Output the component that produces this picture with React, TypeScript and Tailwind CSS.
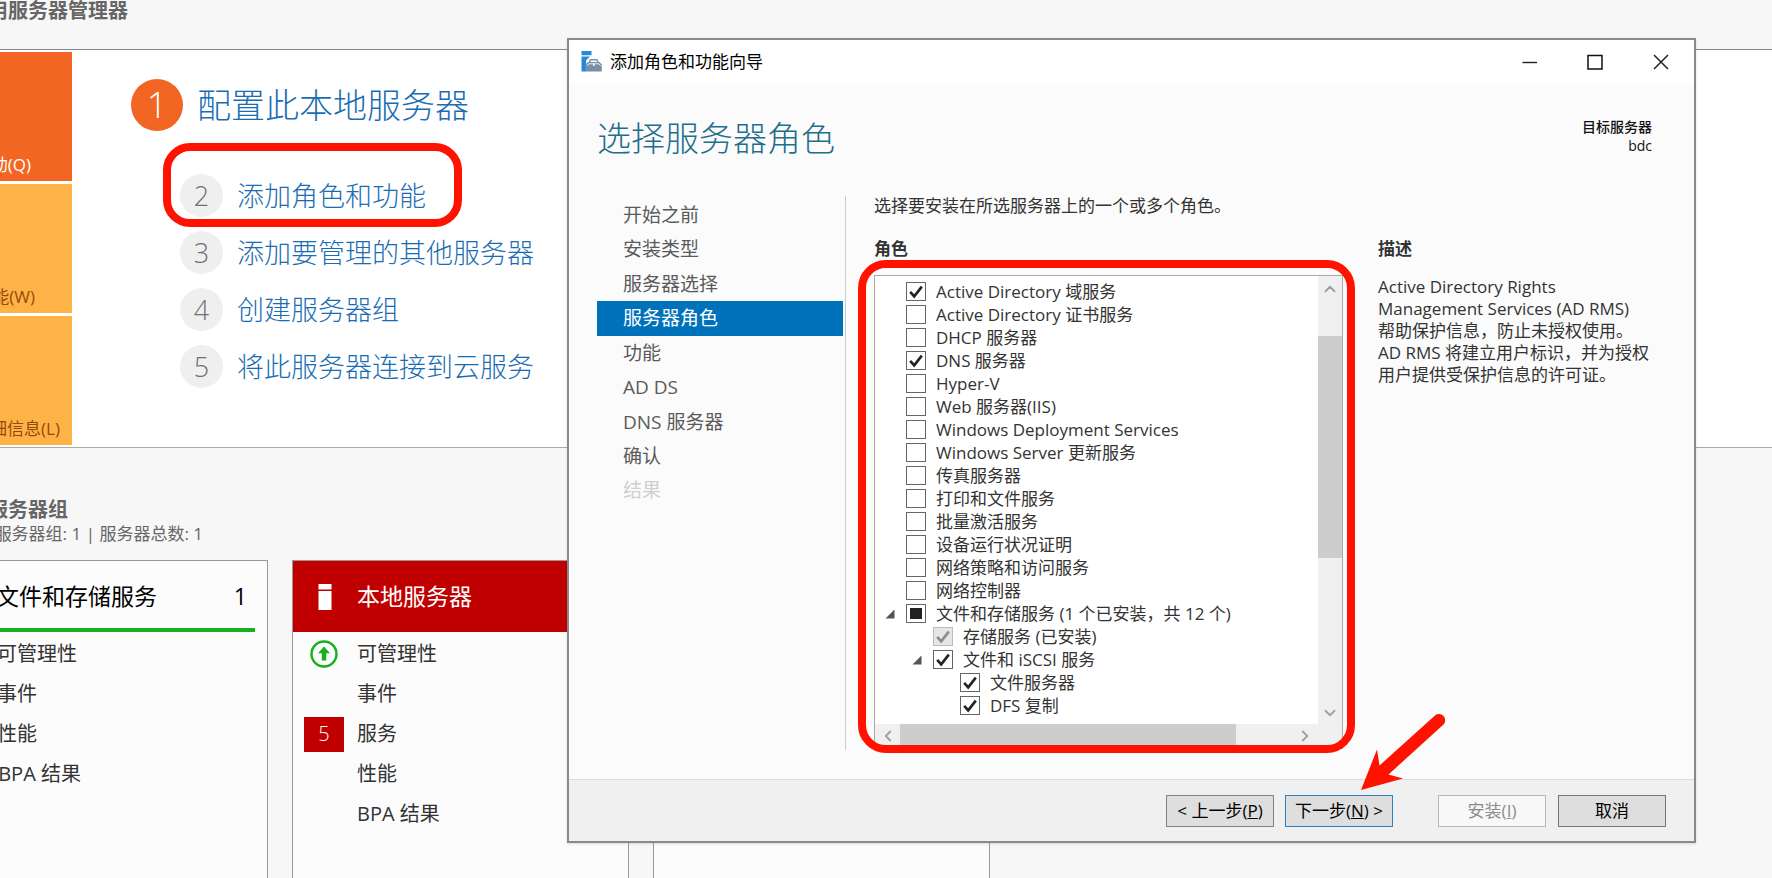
import { useId } from "react";
import type { ReactNode } from "react";
import { ChevronDown, ChevronLeft, ChevronRight, ChevronUp } from "lucide-react";

const quickTiles = [
  { label: "动(Q)", tile: "bg-[#f26522] text-white pr-[41px]" },
  { label: "能(W)", tile: "bg-[#ffb347] text-[#94490a] pr-[37px]" },
  { label: "细信息(L)", tile: "bg-[#ffb347] text-[#94490a] pr-3" },
];

const steps = [
  { n: 2, label: "添加角色和功能", marked: true },
  { n: 3, label: "添加要管理的其他服务器", marked: false },
  { n: 4, label: "创建服务器组", marked: false },
  { n: 5, label: "将此服务器连接到云服务", marked: false },
];

const navItems = [
  "开始之前",
  "安装类型",
  "服务器选择",
  "服务器角色",
  "功能",
  "AD DS",
  "DNS 服务器",
  "确认",
  "结果",
];

type Role = {
  label: string;
  state?: "on" | "mixed" | "locked";
  level?: 1 | 2;
  open?: boolean;
};

const roles: Role[] = [
  { label: "Active Directory 域服务", state: "on" },
  { label: "Active Directory 证书服务" },
  { label: "DHCP 服务器" },
  { label: "DNS 服务器", state: "on" },
  { label: "Hyper-V" },
  { label: "Web 服务器(IIS)" },
  { label: "Windows Deployment Services" },
  { label: "Windows Server 更新服务" },
  { label: "传真服务器" },
  { label: "打印和文件服务" },
  { label: "批量激活服务" },
  { label: "设备运行状况证明" },
  { label: "网络策略和访问服务" },
  { label: "网络控制器" },
  { label: "文件和存储服务 (1 个已安装，共 12 个)", state: "mixed", open: true },
  { label: "存储服务 (已安装)", state: "locked", level: 1 },
  { label: "文件和 iSCSI 服务", state: "on", level: 1, open: true },
  { label: "文件服务器", state: "on", level: 2 },
  { label: "DFS 复制", state: "on", level: 2 },
];

const indents = ["pl-[10px]", "pl-[37px]", "pl-[64px]"];

function RoleRow({ role }: { role: Role }) {
  const id = useId();
  return (
    <li className={`flex h-[23px] items-center ${indents[role.level ?? 0]}`}>
      <span className="flex w-[21px] items-center">
        {role.open && (
          <svg width="10" height="10" viewBox="0 0 10 10" aria-hidden="true">
            <path d="M9.5 0.5V9.5H0.5Z" fill="#555" />
          </svg>
        )}
      </span>
      <span className="grid place-items-center">
        <input
          id={id}
          type="checkbox"
          defaultChecked={role.state === "on" || role.state === "locked"}
          disabled={role.state === "locked"}
          className="peer col-start-1 row-start-1 h-[19px] w-5 appearance-none border border-[#666] bg-white disabled:border-[#bcbcbc] disabled:bg-[#e6e6e6]"
        />
        <svg
          width="14"
          height="14"
          viewBox="0 0 14 14"
          aria-hidden="true"
          className="pointer-events-none col-start-1 row-start-1 text-[#222] opacity-0 peer-checked:opacity-100 peer-disabled:text-[#8c8c8c]"
        >
          <path d="M1.2 6.8L5.2 11.4L12.8 1.6" fill="none" stroke="currentColor" strokeWidth="2.6" />
        </svg>
        {role.state === "mixed" && (
          <span className="pointer-events-none col-start-1 row-start-1 h-[11px] w-3 bg-[#222]" />
        )}
      </span>
      <label htmlFor={id} className="pl-[10px] whitespace-nowrap">
        {role.label}
      </label>
    </li>
  );
}

function WizardButton({ look, disabled, children }: { look: string; disabled?: boolean; children: ReactNode }) {
  return (
    <button
      type="button"
      disabled={disabled}
      className={`h-8 w-[108px] border text-[17px] leading-5 whitespace-nowrap ${look}`}
    >
      {children}
    </button>
  );
}

function AppIcon() {
  return (
    <svg width="21" height="21" viewBox="0 0 21 21" aria-hidden="true">
      <path d="M0.5 0H10.5V4.2H0.5ZM0.5 5.4H9L5 9.5V20.5H0.5Z" fill="#2688d8" />
      <path d="M4.600 20.500V13.200L7 11H18.200L20.800 13.200V20.500Z" fill="#7690a8" />
      <path d="M8.800 12V10.200Q8.800 8.800 10.200 8.800H15.200Q16.600 8.800 16.600 10.200V12" fill="none" stroke="#7690a8" strokeWidth="1.5" />
      <path d="M5.800 14.800L8 12.800H17.600L19.800 14.800" fill="none" stroke="#fff" strokeWidth="0.9" />
      <path d="M12 12.800H13.500V15H12Z" fill="#fff" />
    </svg>
  );
}

export default function App() {
  return (
    <div className="relative flex h-screen flex-col overflow-hidden bg-[#f7f7f7] font-['Open_Sans','Noto_Sans_CJK_SC',sans-serif] text-[17px] text-[#333]">
      <header className="flex h-[49px] w-32 shrink-0 justify-end">
        <h1 className="text-[20px] leading-[22px] font-bold whitespace-nowrap text-[#666]">用服务器管理器</h1>
      </header>

      <section className="flex h-[399px] shrink-0 border-y border-t-[#888] border-b-[#aaa] bg-white pt-0.5 pb-px">
        <div className="flex w-[72px] shrink-0 flex-col gap-[3px] pb-px">
          {quickTiles.map((t) => (
            <button
              key={t.label}
              type="button"
              className={`flex flex-1 items-end justify-end pb-1 leading-6 whitespace-nowrap ${t.tile}`}
            >
              {t.label}
            </button>
          ))}
        </div>
        <div className="pt-[27px] pl-[59px]">
          <a href="#local" className="flex items-center gap-[14px] text-[34px] leading-[52px] font-light whitespace-nowrap text-[#1a6db3]">
            <span className="flex size-[52px] items-center justify-center rounded-full bg-[#f26522] text-[36px] text-white">
              1
            </span>
            配置此本地服务器
          </a>
          <ol className="flex flex-col gap-[14px] pt-[43px] pl-[49px]">
            {steps.map((s) => (
              <li key={s.n} className="relative">
                <a href={`#step-${s.n}`} className="flex items-center gap-[14px] text-[27px] leading-[43px] font-light whitespace-nowrap text-[#1a6db3]">
                  <span className="flex size-[43px] items-center justify-center rounded-full bg-[#efefef] text-[#707070]">
                    {s.n}
                  </span>
                  {s.label}
                </a>
                {s.marked && (
                  <span className="pointer-events-none absolute -top-[31px] -left-[17px] h-[84px] w-[299px] rounded-[27px] border-8 border-[#ff1200]" />
                )}
              </li>
            ))}
          </ol>
        </div>
      </section>

      <section className="flex min-h-0 flex-1 flex-col pt-[50px]">
        <h2 className="flex w-[68px] justify-end text-[20px] leading-6 font-bold whitespace-nowrap text-[#666]">
          服务器组
        </h2>
        <p className="flex w-[203px] justify-end leading-6 whitespace-nowrap text-[#666]">服务器组: 1 | 服务器总数: 1</p>
        <div className="mt-[14px] flex flex-1 text-[20px] whitespace-nowrap">
          <article className="w-[268px] shrink-0 border-t border-r border-[#999] bg-[#fcfcfc] pr-3">
            <div className="flex h-[71px] items-center justify-between border-b-4 border-[#16b01c] pr-2 pt-[3px] text-[23px] text-black">
              <h3 className="flex w-[157px] justify-end">文件和存储服务</h3>
              <span>1</span>
            </div>
            <ul className="w-20 pt-0.5 leading-10">
              <li className="flex w-[77px] justify-end">可管理性</li>
              <li className="flex w-[37px] justify-end">事件</li>
              <li className="flex w-[37px] justify-end">性能</li>
              <li className="flex w-[81px] justify-end">BPA 结果</li>
            </ul>
          </article>
          <article className="ml-6 w-[337px] shrink-0 border-x border-t border-[#999] bg-[#fcfcfc]">
            <div className="flex h-[71px] items-center bg-[#c00000] text-[23px] text-white">
              <span className="flex w-16 justify-center">
                <svg width="14" height="26" viewBox="0 0 14 26" aria-hidden="true">
                  <path d="M0.500 0H13.500V5.600H0.500ZM0.500 7H13.500V26H0.500Z" fill="#fff" />
                </svg>
              </span>
              <h3>本地服务器</h3>
            </div>
            <ul className="pt-0.5 leading-10">
              {["可管理性", "事件", "服务", "性能", "BPA 结果"].map((label, i) => (
                <li key={label} className="flex items-center">
                  <span className="flex w-16 items-center pl-[11px]">
                    {i === 0 && (
                      <svg width="40" height="28" viewBox="0 0 40 28" aria-hidden="true">
                        <circle cx="20" cy="14" r="12.5" fill="none" stroke="#16b01c" strokeWidth="2.4" />
                        <path d="M20 6.5L26 13.200H22.200V20.5H17.800V13.200H14Z" fill="#16b01c" />
                      </svg>
                    )}
                    {i === 2 && (
                      <span className="flex h-[35px] w-10 items-center justify-center bg-[#c00000] font-light text-white">
                        5
                      </span>
                    )}
                  </span>
                  {label}
                </li>
              ))}
            </ul>
          </article>
          <article className="ml-6 w-[337px] shrink-0 border-x border-t border-[#999] bg-[#fcfcfc]" />
        </div>
      </section>

      <div
        role="dialog"
        aria-labelledby="wizard-title"
        className="absolute top-[38px] right-[76px] left-[567px] flex flex-col border-2 border-[#8a8a8a] bg-[#fbfbfb] shadow-sm"
      >
        <div className="flex h-11 items-center bg-white pr-[25px] pb-px pl-3 text-black">
          <AppIcon />
          <h2 id="wizard-title" className="flex-1 pl-2">
            添加角色和功能向导
          </h2>
          <div className="flex gap-[50px]">
            <button type="button" aria-label="最小化">
              <svg width="16" height="16" viewBox="0 0 16 16">
                <path d="M1.500 8.5H16" stroke="#222" strokeWidth="1.4" />
              </svg>
            </button>
            <button type="button" aria-label="最大化">
              <svg width="16" height="16" viewBox="0 0 16 16">
                <path d="M1 1.5H15V15H1Z" fill="none" stroke="#111" strokeWidth="1.5" />
              </svg>
            </button>
            <button type="button" aria-label="关闭">
              <svg width="16" height="16" viewBox="0 0 16 16">
                <path d="M1 1L15 15M15 1L1 15" stroke="#222" strokeWidth="1.5" />
              </svg>
            </button>
          </div>
        </div>

        <div className="flex h-28 justify-between pr-[42px] pl-7">
          <h3 className="pt-7 text-[34px] leading-[52px] font-light text-[#1d6f8c]">选择服务器角色</h3>
          <div className="pt-[33px] text-right text-[14px] leading-[19px] text-[#111]">
            <div className="font-medium">目标服务器</div>
            <div>bdc</div>
          </div>
        </div>

        <div className="flex h-[583px]">
          <nav className="ml-7 h-[554px] w-[249px] shrink-0 border-r border-[#ccc] pt-0.5 pr-0.5">
            <ul className="flex h-[310px] flex-col text-[19px] text-[#5a5a5a]">
              {navItems.map((item) => (
                <li key={item} className="flex flex-1">
                  <a
                    href="#wizard"
                    className={
                      item === "服务器角色"
                        ? "flex flex-1 items-center bg-[#0072bc] pl-[26px] text-white"
                        : item === "结果"
                          ? "flex flex-1 items-center pl-[26px] text-[#cfcfcf]"
                          : "flex flex-1 items-center pl-[26px]"
                    }
                  >
                    {item}
                  </a>
                </li>
              ))}
            </ul>
          </nav>

          <div className="flex-1 pl-7">
            <p className="leading-5">选择要安装在所选服务器上的一个或多个角色。</p>
            <div className="flex pt-[23px]">
              <div>
                <h4 className="leading-5 font-bold">角色</h4>
                <div className="relative mt-4 grid h-[474px] w-[469px] grid-cols-[1fr_24px] grid-rows-[1fr_24px] border border-[#aaa] bg-white">
                  <ul className="pt-1">
                    {roles.map((r) => (
                      <RoleRow key={r.label} role={r} />
                    ))}
                  </ul>
                  <div className="flex flex-col items-center bg-[#f0f0f0] text-[#a0a0a0]">
                    <ChevronUp size={18} strokeWidth={2.5} className="mt-1" />
                    <div className="mt-[38px] h-[222px] w-full bg-[#cdcdcd]" />
                    <ChevronDown size={18} strokeWidth={2.5} className="mt-auto mb-0.5" />
                  </div>
                  <div className="flex items-center bg-[#f0f0f0] text-[#a0a0a0]">
                    <ChevronLeft size={18} strokeWidth={2.5} className="ml-1" />
                    <div className="ml-[3px] h-full w-[336px] bg-[#cdcdcd]" />
                    <ChevronRight size={18} strokeWidth={2.5} className="mr-1 ml-auto" />
                  </div>
                  <div className="bg-[#f0f0f0]" />
                  <span className="pointer-events-none absolute -top-4 -right-[13px] -bottom-[5px] -left-[17px] rounded-[28px] border-8 border-[#ff1200]" />
                </div>
              </div>
              <div className="pl-[35px]">
                <h4 className="leading-5 font-bold">描述</h4>
                <p className="pt-[17px] leading-[22px] whitespace-nowrap">
                  Active Directory Rights
                  <br />
                  Management Services (AD RMS)
                  <br />
                  帮助保护信息，防止未授权使用。
                  <br />
                  AD RMS 将建立用户标识，并为授权
                  <br />
                  用户提供受保护信息的许可证。
                </p>
              </div>
            </div>
          </div>
        </div>

        <footer className="flex h-[62px] items-center justify-end border-t border-[#dcdcdc] bg-[#f0f0f0] pr-7 text-black">
          <WizardButton look="border-[#808080] bg-[#dedede]">
            &lt; 上一步(<u>P</u>)
          </WizardButton>
          <span className="relative ml-[11px]">
            <WizardButton look="border-[#2f80bf] bg-[#dedede]">
              下一步(<u>N</u>) &gt;
            </WizardButton>
            <svg
              width="86"
              height="80"
              viewBox="0 0 86 80"
              aria-hidden="true"
              className="pointer-events-none absolute -top-[84px] left-[75px]"
            >
              <path
                d="M1 79L17 38.500L19.500 54.500L75 4.500A6.200 6.200 0 0 1 83.500 13.500L28.500 63.500L43 67.500Z"
                fill="#ff1200"
              />
            </svg>
          </span>
          <span className="ml-[45px]">
            <WizardButton disabled look="border-[#b8b8b8] bg-[#f8f8f8] text-[#8c8c8c]">
              安装(<u>I</u>)
            </WizardButton>
          </span>
          <span className="ml-3">
            <WizardButton look="border-[#777] bg-[#dedede]">取消</WizardButton>
          </span>
        </footer>
      </div>
    </div>
  );
}
